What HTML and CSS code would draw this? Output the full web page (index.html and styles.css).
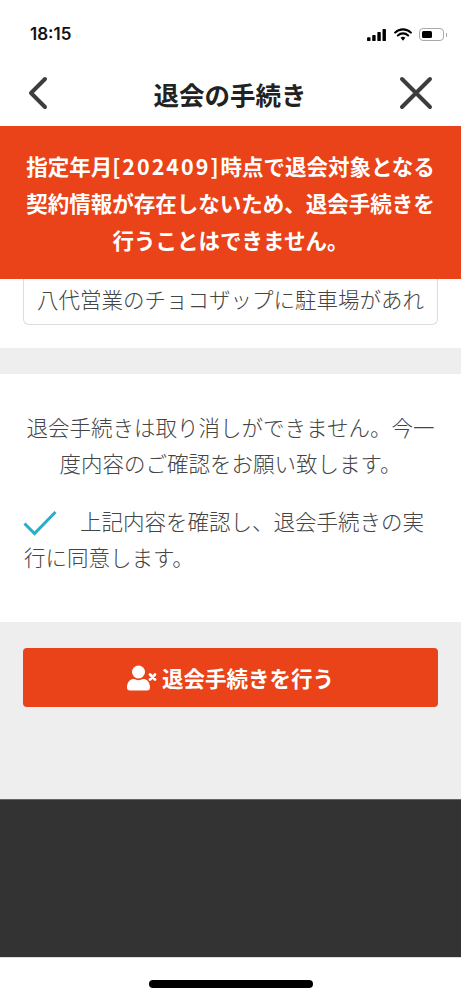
FILE: index.html
```html
<!DOCTYPE html>
<html lang="ja">
<head>
<meta charset="utf-8">
<title>退会の手続き</title>
<link rel="stylesheet" href="styles.css">
</head>
<body>
<div class="status">
  <span class="time">18:15</span>
  <div class="status-icons">
    <svg width="21" height="12" viewBox="0 0 22 14"><rect x="0" y="9.5" width="4" height="4.5" rx="1"/><rect x="6" y="7" width="4" height="7" rx="1"/><rect x="12" y="3.5" width="4" height="10.500" rx="1"/><rect x="18" y="0" width="4" height="14" rx="1"/></svg>
    <svg width="18" height="13" viewBox="0 0 19 14"><path d="M1 5a12 12 0 0 1 17 0M4 8a8 8 0 0 1 11 0" fill="none" stroke="#000" stroke-width="2.2" stroke-linecap="round"/><path d="M6.9 10.6a4 4 0 0 1 5.2 0L9.5 13.6z"/></svg>
    <div class="battery"><div class="level"></div></div><div class="nub"></div>
  </div>
</div>
<header class="nav">
  <svg class="back" width="34" height="34" viewBox="0 0 34 34"><path d="M18 3 4 17l14 14" fill="none" stroke="#3d3d3d" stroke-width="4" stroke-linecap="round" stroke-linejoin="round"/></svg>
  <h1>退会の手続き</h1>
  <svg class="close" width="34" height="34" viewBox="0 0 34 34"><path d="M3 3l28 28M31 3 3 31" fill="none" stroke="#3d3d3d" stroke-width="4" stroke-linecap="round"/></svg>
</header>
<div class="banner">指定年月<span class="latin">[202409]</span>時点で退会対象となる<br>契約情報が存在しないため、退会手続きを<br>行うことはできません。</div>
<section class="reason">
  <div class="field">八代営業のチョコザップに駐車場があれ</div>
</section>
<div class="gap"></div>
<section class="confirm">
  <p class="notice">退会手続きは取り消しができません。今一度内容のご確認をお願い致します。</p>
  <p class="agree"><svg class="check" width="34" height="26" viewBox="0 0 34 26"><path d="M1.5 13.5 11.5 23.5 32.5 2" fill="none" stroke="#27aecb" stroke-width="3"/></svg>上記内容を確認し、退会手続きの実行に同意します。</p>
</section>
<section class="action">
  <button class="submit" type="button">
    <svg width="30" height="26" viewBox="0 0 30 26"><circle cx="11.5" cy="7" r="6.5" fill="#fff"/><path d="M0 22.5c0-6 3.500-8.500 7-8.500 3 1.500 6 1.500 9 0 3.500 0 7 2.500 7 8.500 0 2-1 3-3 3H3c-2 0-3-1-3-3z" fill="#fff"/><path d="M23 9.500l5 5M28 9.500l-5 5" stroke="#fff" stroke-width="2.800" stroke-linecap="round"/></svg>
    <span>退会手続きを行う</span>
  </button>
</section>
<div class="dark"></div>
<div class="home"><div class="indicator"></div></div>
</body>
</html>
```

FILE: styles.css
```css
* { box-sizing: border-box; }
html, body { margin: 0; padding: 0; }
body {
  width: 461px;
  height: 999px;
  overflow: hidden;
  background: #fff;
  color: #444;
  font-family: "Noto Sans CJK JP", "Noto Sans", sans-serif;
  font-size: 21.5px;
  font-weight: 300;
}
.status {
  height: 70px;
  padding: 24px 14px 0 30px;
  display: flex;
  justify-content: space-between;
  align-items: flex-start;
}
.time {
  font-family: Inter, "Liberation Sans", sans-serif;
  font-size: 17px;
  font-weight: 600;
  line-height: 20px;
  color: #111;
}
.status-icons { display: flex; align-items: center; gap: 7px; padding-top: 4px; }
.battery {
  width: 25px;
  height: 13px;
  border: 1px solid #aaa;
  border-radius: 4px;
  padding: 2px;
}
.level { width: 10px; height: 7px; background: #000; border-radius: 1.5px; }
.nub { width: 1.5px; height: 4px; background: #aaa; margin-left: -5px; }
.nav {
  height: 56px;
  display: flex;
  align-items: center;
  justify-content: space-between;
  padding: 0 27px 10px;
}
.nav h1 {
  margin: 0;
  font-size: 25.5px;
  font-weight: 700;
  color: #222;
}
.close { margin-right: 1px; }
.banner {
  height: 153px;
  padding: 21px 0 0;
  background: #ea4319;
  color: #fff;
  font-size: 21.5px;
  font-weight: 700;
  line-height: 37px;
  text-align: center;
  white-space: nowrap;
}
.latin { letter-spacing: 2px; }
.reason { height: 69px; padding: 0 23px; }
.field {
  height: 46px;
  padding: 0 13px;
  border: 1px solid #ddd;
  border-top: 0;
  border-radius: 0 0 6px 6px;
  line-height: 40px;
  white-space: nowrap;
  overflow: hidden;
}
.gap { height: 26px; background: #eee; }
.confirm { height: 248px; padding: 35px 24px 0; }
.notice {
  margin: 0 0 22px;
  line-height: 36px;
  text-align: center;
}
.agree { margin: 0; line-height: 36px; }
.check { vertical-align: -6px; margin-right: 23px; margin-left: -1px; }
.action { height: 177px; padding: 26px 23px 0; background: #eee; }
.submit {
  width: 100%;
  height: 59px;
  border: 0;
  border-radius: 4px;
  background: #ea4319;
  color: #fff;
  font: inherit;
  font-weight: 700;
  display: flex;
  align-items: center;
  justify-content: center;
  gap: 5px;
}
.dark { height: 158px; background: #333; border-top: 1px solid #666; }
.home { height: 42px; border-top: 1px solid #ddd; padding-top: 22px; display: flex; justify-content: center; }
.indicator { width: 164px; height: 8px; border-radius: 4px; background: #000; }
```
